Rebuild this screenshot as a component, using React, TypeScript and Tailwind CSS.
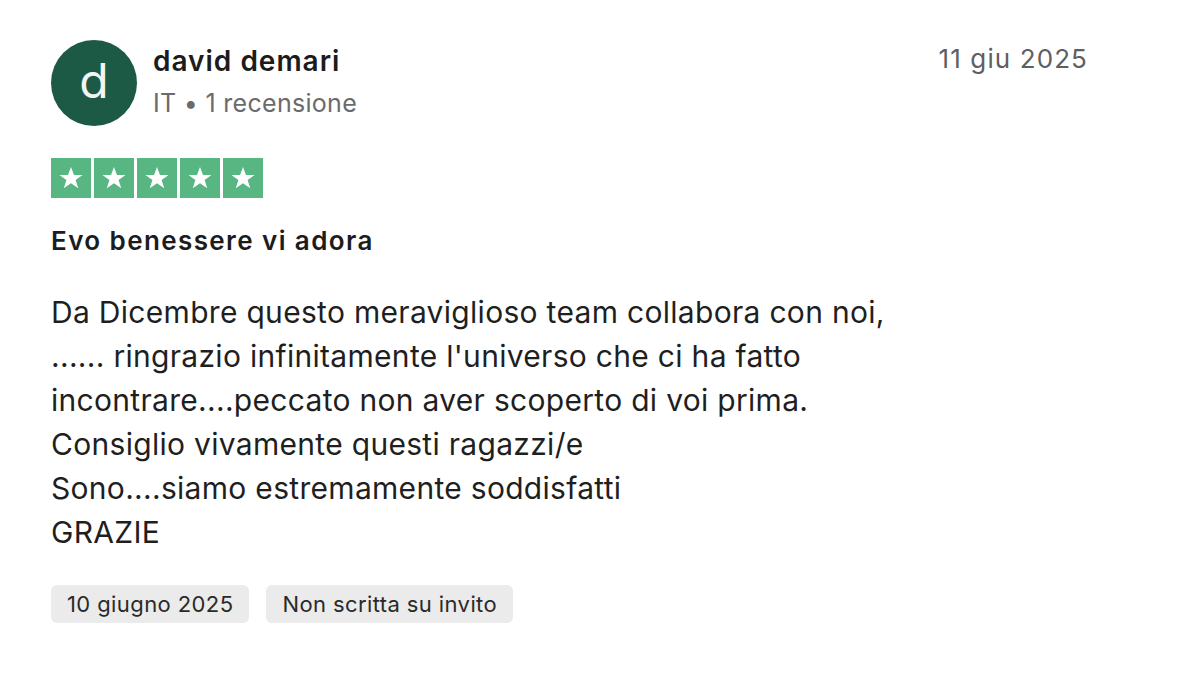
import React from "react";

const Star = () => (
  <div className="w-[40px] h-[40px] bg-[#57b682] flex items-center justify-center">
    <svg width="26" height="26" viewBox="0 0 24 24">
      <path d="M12 1.8l2.75 7.45h7.9l-6.4 4.65 2.45 7.6L12 16.8l-6.7 4.7 2.45-7.6-6.4-4.65h7.9z" fill="#ffffff" />
    </svg>
  </div>
);

export default function App() {
  return (
    <div
      className="w-[1200px] h-[674px] bg-white text-[#1c1c1c]"
      style={{ fontFamily: "Inter, 'Noto Sans', sans-serif" }}
    >
      <div className="pl-[51px] pr-[112px] pt-[40px]">
        <div className="flex items-start">
          <div className="w-[86px] h-[86px] rounded-full bg-[#1c5a46] flex items-center justify-center text-[#f4f4f4] text-[48px] leading-none pb-[5px]">
            d
          </div>
          <div className="ml-[16px] mt-[2px] flex-1">
            <div className="text-[28px] font-semibold leading-[38px] text-[#1c1c1c] tracking-[1px]">david demari</div>
            <div className="text-[25px] leading-[34px] mt-[6px] text-[#6b6b6b] tracking-[0.3px]">IT • 1 recensione</div>
          </div>
          <div className="text-[26px] leading-[34px] text-[#5f5f5f] mt-[2px] tracking-[1.1px]">11 giu 2025</div>
        </div>
        <div className="flex gap-[3px] mt-[32px]">
          <Star />
          <Star />
          <Star />
          <Star />
          <Star />
        </div>
        <div className="mt-[26px] text-[26px] font-semibold leading-[34px] text-[#1c1c1c] tracking-[1.4px]">Evo benessere vi adora</div>
        <div className="mt-[32px] text-[30px] leading-[44px] text-[#1f1f1f] tracking-[0.3px]">
          <div>Da Dicembre questo meraviglioso team collabora con noi,</div>
          <div>...... ringrazio infinitamente l'universo che ci ha fatto</div>
          <div>incontrare....peccato non aver scoperto di voi prima.</div>
          <div>Consiglio vivamente questi ragazzi/e</div>
          <div>Sono....siamo estremamente soddisfatti</div>
          <div>GRAZIE</div>
        </div>
        <div className="flex gap-[17px] mt-[31px]">
          <div className="bg-[#ebebeb] rounded-[6px] px-[16px] h-[38px] flex items-center text-[22px] tracking-[0.4px] text-[#2a2a2a]">10 giugno 2025</div>
          <div className="bg-[#ebebeb] rounded-[6px] px-[16px] h-[38px] flex items-center text-[22px] tracking-[0.4px] text-[#2a2a2a]">Non scritta su invito</div>
        </div>
      </div>
    </div>
  );
}
